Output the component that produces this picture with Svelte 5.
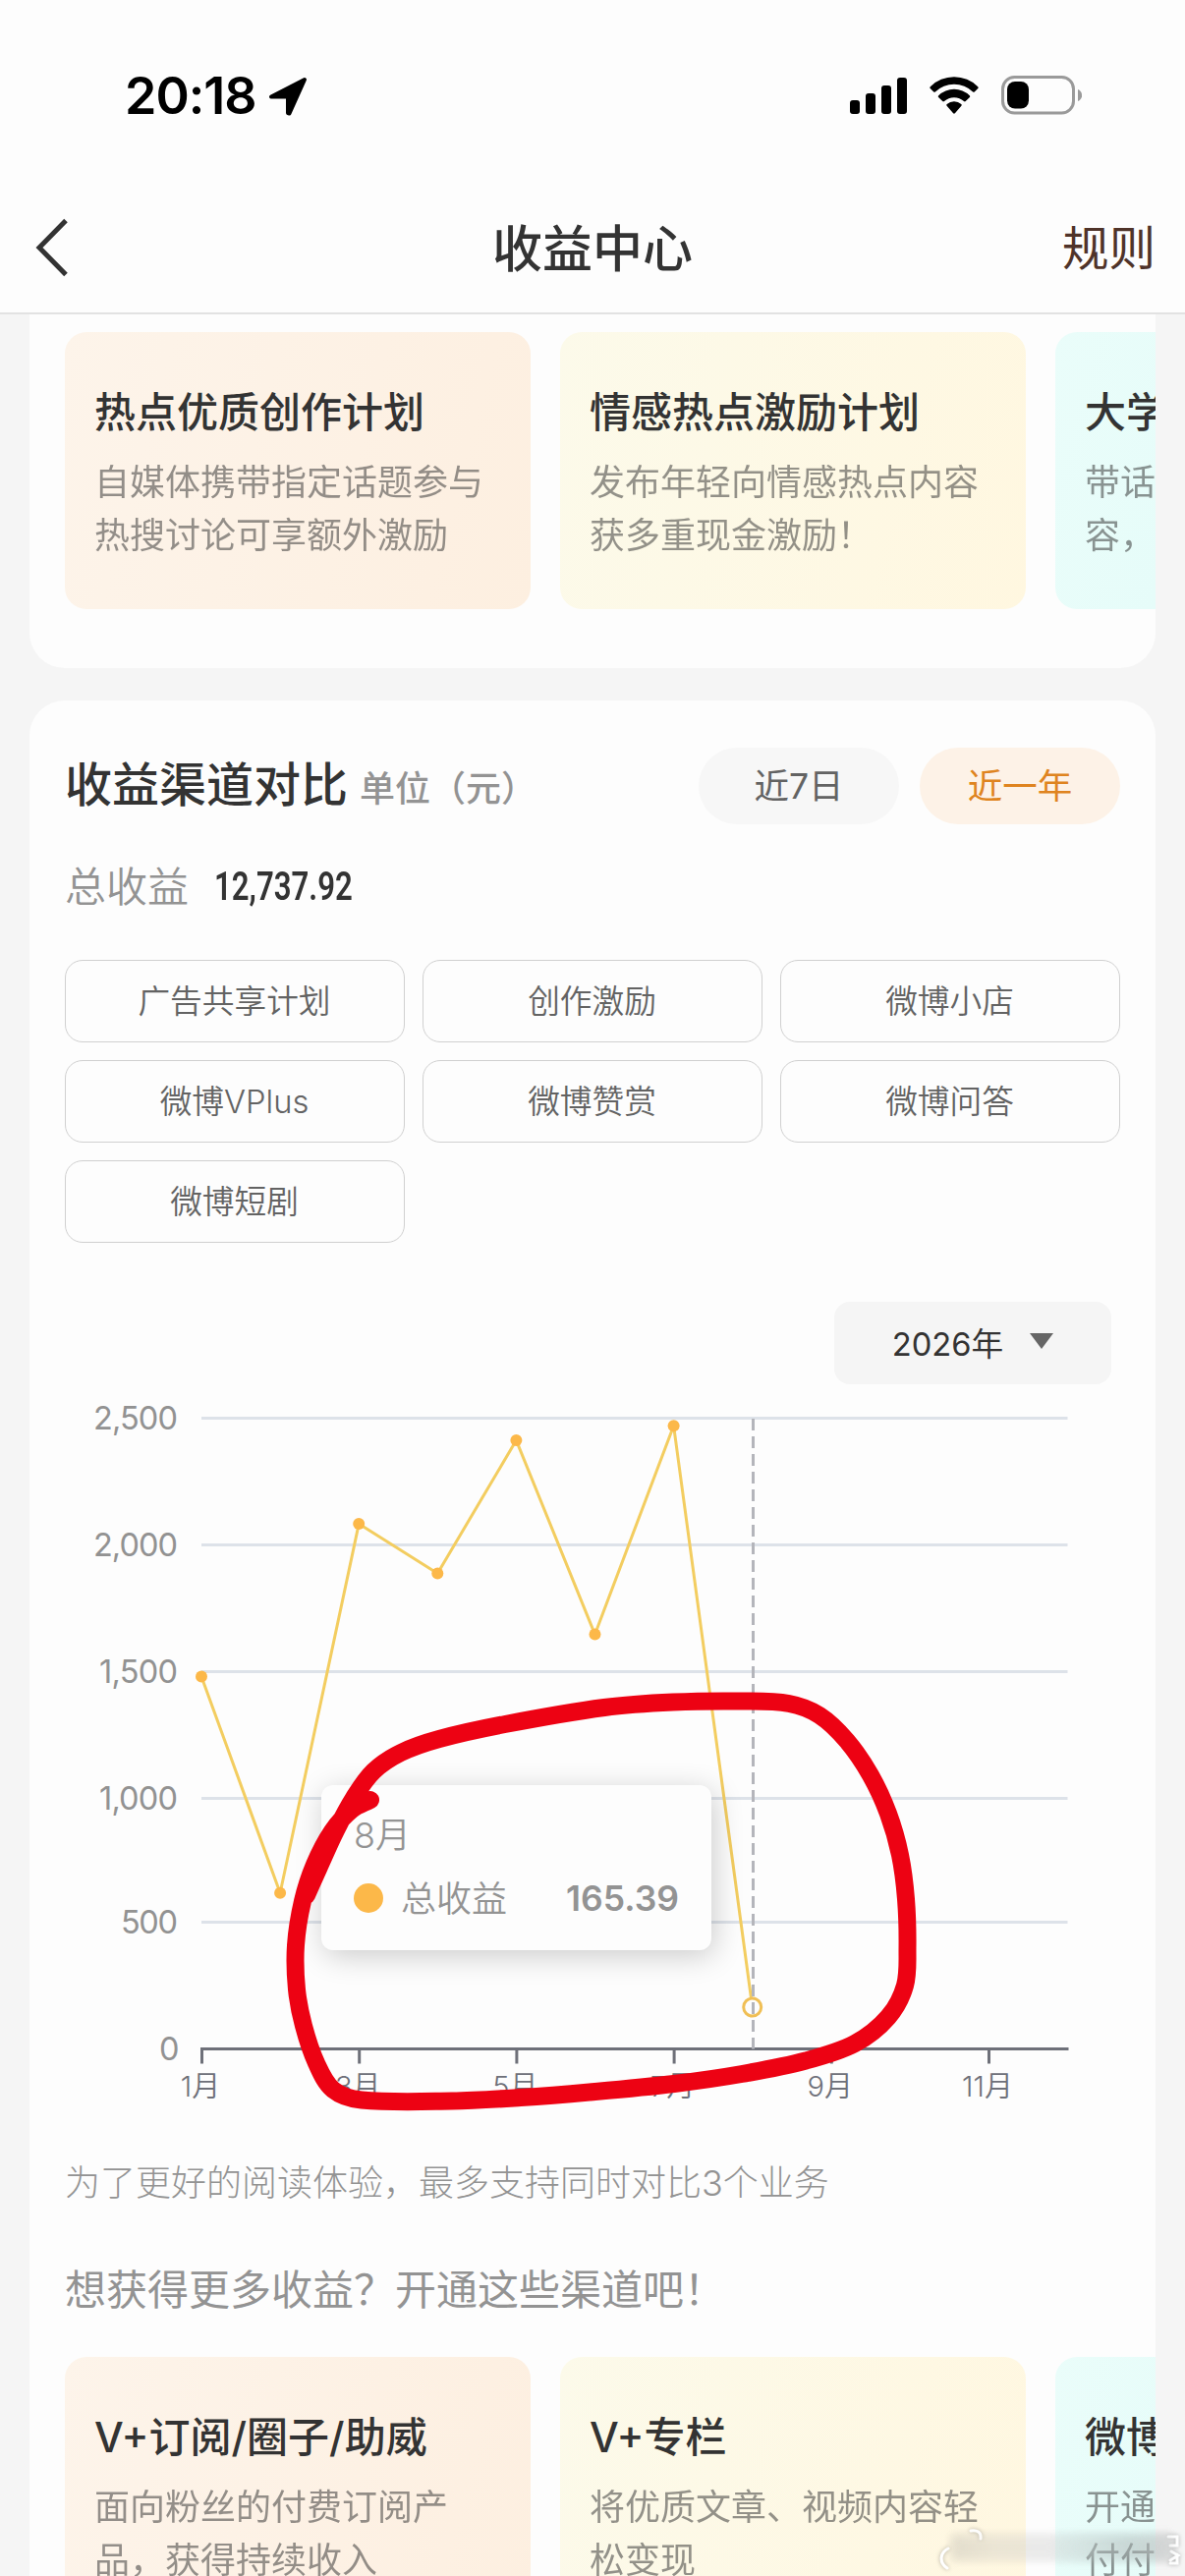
<script lang="ts">
  type Promo = { title: string; lines: string[]; tone: 'peach' | 'cream' | 'mint' };

  const plans: Promo[] = [
    { title: '热点优质创作计划', lines: ['自媒体携带指定话题参与', '热搜讨论可享额外激励'], tone: 'peach' },
    { title: '情感热点激励计划', lines: ['发布年轻向情感热点内容', '获多重现金激励！'], tone: 'cream' },
    { title: '大学', lines: ['带话', '容，'], tone: 'mint' },
  ];

  const upsells: Promo[] = [
    { title: 'V+订阅/圈子/助威', lines: ['面向粉丝的付费订阅产', '品，获得持续收入'], tone: 'peach' },
    { title: 'V+专栏', lines: ['将优质文章、视频内容轻', '松变现'], tone: 'cream' },
    { title: '微博', lines: ['开通', '付付'], tone: 'mint' },
  ];

  const channels = ['广告共享计划', '创作激励', '微博小店', '微博VPlus', '微博赞赏', '微博问答', '微博短剧'];

  const ranges = ['近7日', '近一年'];
  let range = $state('近一年');

  // chart geometry, in px of the chart's own box
  const left = 175;
  const right = 1056.5;
  const base = 675.5;
  const step = 80.1;
  const ticks = [
    { label: '2,500', y: 33.5, w: 86 },
    { label: '2,000', y: 162.5, w: 86 },
    { label: '1,500', y: 291.5, w: 80 },
    { label: '1,000', y: 420.5, w: 80 },
    { label: '500', y: 546.5, w: 58 },
    { label: '0', y: 675.5, w: 19 },
  ];
  const months = [1, 3, 5, 7, 9, 11];
  const earnings = [1476, 618, 2081, 1885, 2412, 1643, 2470, 165.39];

  const x = (i: number) => left + i * step;
  const y = (v: number) => base - v * 0.2568;
  const points = earnings.map((v, i) => ({ x: x(i), y: y(v) }));
  const line = points.map((p) => `${p.x},${p.y}`).join(' ');
  const last = points[points.length - 1];

  // freehand marker stroke
  const stroke: [number, number][] = [
    [377, 1832], [358, 1842], [338, 1864], [320, 1898], [308, 1935], [301, 1980], [302, 2025],
    [309, 2062], [322, 2100], [339, 2127], [368, 2137.5], [460, 2138.5], [530, 2135], [600, 2129.5],
    [686, 2121], [755, 2111], [820, 2097.5], [870, 2080], [904, 2053], [921, 2021], [923.5, 1983],
    [922, 1933], [916, 1888], [904, 1846], [886, 1807], [862, 1772], [834, 1746], [803, 1734],
    [755, 1731.5], [685, 1732.5], [615, 1738], [514, 1755], [447, 1770], [408, 1784],
    [380, 1803], [360, 1830], [342, 1863], [325, 1900], [312, 1929],
  ];
  const marker = stroke.slice(1).reduce((d, p, i) => {
    const p0 = stroke[Math.max(i - 1, 0)];
    const p1 = stroke[i];
    const p3 = stroke[Math.min(i + 2, stroke.length - 1)];
    // handle length follows the segment, so that uneven point spacing leaves no kinks
    const d0 = Math.hypot(p[0] - p0[0], p[1] - p0[1]) || 1;
    const d3 = Math.hypot(p3[0] - p1[0], p3[1] - p1[1]) || 1;
    const h = Math.hypot(p[0] - p1[0], p[1] - p1[1]) / 3;
    const c1 = [p1[0] + ((p[0] - p0[0]) / d0) * h, p1[1] + ((p[1] - p0[1]) / d0) * h];
    const c2 = [p[0] - ((p3[0] - p1[0]) / d3) * h, p[1] - ((p3[1] - p1[1]) / d3) * h];
    return `${d} C${c1} ${c2} ${p}`;
  }, `M${stroke[0]}`);
</script>

{#snippet promoRow(items: Promo[])}
  <div class="promos">
    {#each items as item}
      <article class="promo" data-tone={item.tone}>
        <h3>{item.title}</h3>
        <p>
          {#each item.lines as text}
            <span>{text}</span>
          {/each}
        </p>
      </article>
    {/each}
  </div>
{/snippet}

<main class="page">
  <div class="status">
    <div class="clock">
      <span>20:18</span>
      <svg width="42" height="42" viewBox="0 0 42 42" aria-hidden="true">
        <path
          d="M37 4 3 21.500h17v16.500l1.500.5z"
          stroke="#000"
          stroke-width="4"
          stroke-linejoin="round"
        />
      </svg>
    </div>
    <div class="signals">
      <svg width="58" height="40" viewBox="0 0 58 40" aria-hidden="true">
        <rect x="0" y="25" width="10" height="14" rx="3" />
        <rect x="16" y="18" width="10" height="21" rx="3" />
        <rect x="32" y="10" width="10" height="29" rx="3" />
        <rect x="48" y="2" width="10" height="37" rx="3" />
      </svg>
      <svg width="50" height="40" viewBox="0 0 50 40" aria-hidden="true">
        <path d="M0.800 11.200a34.500 34.500 0 0 1 48.400 0c.6.6.6 1.200.1 1.700l-3.500 3.500c-.5.500-1.100.5-1.700 0a27.500 27.500 0 0 0-38.200 0c-.6.5-1.200.5-1.700 0L.7 12.900c-.5-.5-.5-1.100.1-1.700z" />
        <path d="M9.200 20.200a22.800 22.800 0 0 1 31.600 0c.6.600.6 1.200.1 1.700l-4.200 4.200c-.5.500-1.100.5-1.700 0a14.800 14.800 0 0 0-20 0c-.6.500-1.200.5-1.700 0l-4.200-4.200c-.5-.5-.5-1.100.1-1.700z" />
        <path d="M17.700 29a11 11 0 0 1 14.600 0c.6.500.6 1.100.1 1.700l-6.500 7.500c-.6.600-1.200.6-1.800 0l-6.500-7.500c-.5-.6-.5-1.200.1-1.700z" />
      </svg>
      <svg width="82" height="40" viewBox="0 0 82 40" aria-hidden="true">
        <rect x="1.500" y="1.500" width="72" height="36.500" rx="12" fill="none" stroke="#9a9a9a" stroke-width="3" />
        <rect x="6" y="6" width="22" height="27.500" rx="8" />
        <path d="M78 14c5.500 2.200 5.500 9.800 0 12z" fill="#9a9a9a" />
      </svg>
    </div>
  </div>

  <header class="navbar">
    <button class="back" type="button" aria-label="返回">
      <svg width="36" height="62" viewBox="0 0 36 62" fill="none" stroke="#333" stroke-width="5">
        <path d="M33 3.500 6 31l27 27.500" />
      </svg>
    </button>
    <h1>收益中心</h1>
    <button class="rules" type="button">规则</button>
  </header>

  <div class="content">
    <section class="card plans">
      {@render promoRow(plans)}
    </section>

    <section class="card compare">
      <div class="heading">
        <h2>收益渠道对比</h2>
        <span class="unit">单位（元）</span>
        <div class="ranges">
          {#each ranges as item}
            <button type="button" class:active={range === item} onclick={() => (range = item)}>{item}</button>
          {/each}
        </div>
      </div>

      <div class="total">
        <span>总收益</span>
        <strong>12,737.92</strong>
      </div>

      <div class="channels">
        {#each channels as name}
          <button type="button">{name}</button>
        {/each}
      </div>

      <div class="toolbar">
        <button type="button" class="year">
          <span>2026年</span>
          <svg width="24" height="16" viewBox="0 0 24 16" fill="#666"><path d="M0 0h24L12 16z" /></svg>
        </button>
      </div>

      <div class="chart">
        <svg width="1146" height="750" viewBox="0 0 1146 750">
          {#each ticks as tick}
            {#if tick.label !== '0'}
              <line x1={left} x2={right} y1={tick.y} y2={tick.y} stroke="#dde2e9" stroke-width="3" />
            {/if}
            <text class="value" x={151 - tick.w} y={tick.y + 11} textLength={tick.w}>{tick.label}</text>
          {/each}
          <line x1={left - 1} x2={right + 1} y1={base} y2={base} stroke="#6e7079" stroke-width="3" />
          {#each months as month}
            <line x1={x(month - 1) + 0.5} x2={x(month - 1) + 0.5} y1={base} y2={base + 15} stroke="#6e7079" stroke-width="3" />
            <text class="month" x={x(month - 1) - 1} y="724" text-anchor="middle">{month}月</text>
          {/each}
          <polyline points={line} fill="none" stroke="#f3cd60" stroke-width="3" stroke-linejoin="bevel" />
          {#each points.slice(0, -1) as p}
            <circle cx={p.x} cy={p.y} r="6" fill="#fcb849" />
          {/each}
          <circle cx={last.x} cy={last.y} r="9" fill="#fdfdfd" stroke="#f0bf55" stroke-width="3" />
          <line x1="736.500" x2="736.500" y1="34" y2={base} stroke="#b4b5bb" stroke-width="3" stroke-dasharray="12 6" />
        </svg>
        <div class="tooltip">
          <div>8月</div>
          <div class="entry">
            <i></i>
            <span>总收益</span>
            <b>165.39</b>
          </div>
        </div>
      </div>

      <p class="hint">为了更好的阅读体验，最多支持同时对比3个业务</p>
      <p class="ask">想获得更多收益？开通这些渠道吧！</p>
      {@render promoRow(upsells)}
    </section>
  </div>

  <svg class="marker" width="1206" height="2622" viewBox="0 0 1206 2622" aria-hidden="true">
    <path d={marker} fill="none" stroke="#ed0213" stroke-width="18" stroke-linecap="round" stroke-linejoin="round" />
  </svg>

  <div class="stamp" aria-hidden="true">
    <div class="haze"></div>
    <svg width="250" height="50" viewBox="0 0 250 50" fill="none" stroke="#fff" stroke-width="3" stroke-linecap="round">
      <path d="M9 22c-8 4-10 14-1 20M32 4c6-1 11 1 10 8M233 10h9v9h-7M236 25l7 4-8 5M242 28v9h-7" />
    </svg>
  </div>
</main>

<style>
  :global(body) {
    margin: 0;
    background: #f5f5f5;
  }
  .page {
    position: relative;
    width: 1206px;
    height: 2622px;
    overflow: hidden;
    background: #f5f5f5;
    color: #333;
    font-family: Inter, 'Noto Sans CJK SC', sans-serif;
  }
  h1,
  h2,
  h3,
  p {
    margin: 0;
  }
  button {
    padding: 0;
    border: none;
    background: none;
    color: inherit;
    font: inherit;
  }
  svg {
    display: block;
    flex: none;
  }

  .status {
    display: flex;
    justify-content: space-between;
    box-sizing: border-box;
    height: 186px;
    padding: 77px 105px 0 127px;
    background: #fdfdfd;
    color: #000;
  }
  .clock {
    display: flex;
    gap: 12px;
    height: 42px;
    font-size: 52px;
    font-weight: 600;
    line-height: 42px;
    letter-spacing: -1px;
  }
  .signals {
    display: flex;
    gap: 23px;
  }

  .navbar {
    display: grid;
    grid-template-columns: 300px 1fr 300px;
    align-items: center;
    box-sizing: border-box;
    height: 134px;
    padding: 0 30px 0 34px;
    border-bottom: 2px solid #e2e2e2;
    background: #fdfdfd;
  }
  .back {
    justify-self: start;
  }
  h1 {
    margin: 3px 4px 0 0;
    text-align: center;
    font-size: 51px;
    font-weight: 500;
    line-height: 70px;
  }
  .rules {
    justify-self: end;
    padding-top: 1px;
    color: #4f3329;
    font-size: 47.5px;
    line-height: 70px;
  }

  .content {
    display: flex;
    flex-direction: column;
    gap: 33px;
    padding: 0 30px;
  }
  .card {
    box-sizing: border-box;
    overflow: hidden;
    padding: 0 36px;
    background: #fdfdfd;
  }
  .plans {
    height: 360px;
    padding-top: 18px;
    border-radius: 0 0 36px 36px;
  }
  .compare {
    height: 2000px;
    padding-top: 47px;
    border-radius: 36px 36px 0 0;
  }

  .promos {
    display: flex;
    gap: 30px;
  }
  .promo {
    box-sizing: border-box;
    flex: 0 0 474px;
    height: 282px;
    padding: 52px 30px 0;
    border-radius: 22px;
  }
  .promo[data-tone='peach'] {
    background: linear-gradient(105deg, #fdf4ea, #fdefe0);
  }
  .promo[data-tone='cream'] {
    background: linear-gradient(105deg, #fcfaea, #fff7e0);
  }
  .promo[data-tone='mint'] {
    background: linear-gradient(105deg, #eafdfa, #ddfaf7);
  }
  h3 {
    font-size: 42px;
    font-weight: 500;
    line-height: 60px;
    white-space: nowrap;
  }
  .promo p {
    margin-top: 14px;
    color: #333;
    opacity: 0.52;
    font-size: 36px;
    font-weight: 400;
    line-height: 54px;
  }
  .promo span {
    display: block;
    white-space: nowrap;
  }

  .heading {
    display: flex;
    align-items: center;
    height: 79px;
  }
  h2 {
    margin-top: -2px;
    font-size: 48px;
    font-weight: 500;
    line-height: 70px;
  }
  .unit {
    margin: 1px 0 0 12px;
    color: #939393;
    font-size: 36px;
    font-weight: 500;
  }
  .ranges {
    display: flex;
    gap: 21px;
    margin-left: auto;
  }
  .ranges button {
    width: 204px;
    height: 78px;
    padding-bottom: 4px;
    border-radius: 39px;
    background: #f7f7f7;
    color: #636363;
    font-size: 35.5px;
  }
  .ranges .active {
    background: #fdf2e7;
    color: #df8420;
  }

  .total {
    display: flex;
    align-items: center;
    gap: 26px;
    height: 60px;
    margin-top: 33px;
  }
  .total span {
    margin-top: -5px;
    color: #939393;
    font-size: 42px;
    font-weight: 350;
  }
  .total strong {
    font-family: Roboto, sans-serif;
    font-size: 41px;
    font-weight: 600;
    transform: scaleX(0.76);
    transform-origin: left;
  }

  .channels {
    display: grid;
    grid-template-columns: repeat(3, 1fr);
    gap: 18px;
    margin-top: 45px;
  }
  .channels button {
    box-sizing: border-box;
    height: 84px;
    padding: 0 1px 6px 0;
    border: 1.5px solid #d0d0d0;
    border-radius: 18px;
    color: #636363;
    font-size: 32.7px;
    font-weight: 350;
  }

  .toolbar {
    display: flex;
    justify-content: flex-end;
    margin: 60px 9px 0 0;
  }
  .year {
    display: flex;
    align-items: center;
    justify-content: center;
    gap: 27px;
    width: 282px;
    height: 84px;
    padding-bottom: 4px;
    box-sizing: border-box;
    border-radius: 16px;
    background: #f5f5f5;
    font-size: 32.7px;
  }

  .chart {
    position: relative;
    height: 750px;
    margin: 1px -36px 0;
  }
  .value {
    fill: #929292;
    font-size: 32.5px;
    font-weight: 400;
  }
  .month {
    fill: #6e7079;
    font-size: 29px;
    font-weight: 350;
  }
  .tooltip {
    position: absolute;
    top: 407px;
    left: 297px;
    box-sizing: border-box;
    width: 397px;
    height: 168px;
    padding: 24px 33px;
    border-radius: 12px;
    background: #fdfdfd;
    box-shadow: 3px 6px 30px rgb(0 0 0 / 20%);
    color: #939393;
    font-size: 36px;
    font-weight: 350;
    line-height: 54px;
  }
  .entry {
    display: flex;
    align-items: center;
    margin-top: 11px;
  }
  .entry i {
    width: 30px;
    height: 30px;
    margin: -3px 18px 0 0;
    border-radius: 50%;
    background: #fcb849;
  }
  .entry b {
    margin-left: auto;
    font-size: 35.5px;
    font-weight: 600;
  }

  .hint {
    margin-top: 35px;
    color: #939393;
    font-size: 36px;
    font-weight: 300;
    line-height: 54px;
  }
  .ask {
    margin: 50px 0 36px;
    color: #939393;
    font-size: 42px;
    line-height: 64px;
  }

  .marker {
    position: absolute;
    inset: 0;
    pointer-events: none;
  }
  .stamp {
    position: absolute;
    right: 0;
    bottom: 0;
    width: 250px;
    height: 50px;
    filter: drop-shadow(0 0 2px rgb(0 0 0 / 30%));
  }
  .haze {
    position: absolute;
    inset: 8px 14px 16px 12px;
    background: linear-gradient(90deg, #dad6cb80, #f4f0e880 20%, #f1f1f180 45%, #e1eeecb0 60%, #c4cfceb0 80%, #d9dddd);
    filter: blur(4px);
    opacity: 0.6;
  }
</style>
